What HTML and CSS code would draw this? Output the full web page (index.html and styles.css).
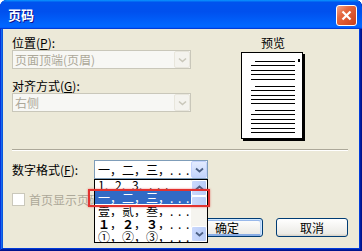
FILE: index.html
```html
<!DOCTYPE html>
<html lang="zh-CN">
<head>
	<meta charset="utf-8">
	<title>页码</title>
	<link rel="stylesheet" href="styles.css">
</head>
<body>
	<div class="window">
		<div class="titlebar">
			<span class="title">页码</span>
			<span class="close">
				<svg width="19" height="19" viewBox="0 0 19 19"><path d="M5.5 5.5 L13.5 13.5 M13.5 5.5 L5.5 13.5" stroke="#fff" stroke-width="2.2"/></svg>
			</span>
		</div>

		<div class="client">
			<div class="top">
				<div class="fields">
					<div class="label">位置(<u>P</u>):</div>
					<div class="combo disabled">
						<span class="value">页面顶端(页眉)</span>
						<span class="drop"><svg width="9" height="6" viewBox="0 0 9 6"><path d="M1 1.5 L4.5 4.5 L8 1.5" fill="none" stroke="#c9c7ba" stroke-width="1.6"/></svg></span>
					</div>
					<div class="label second">对齐方式(<u>G</u>):</div>
					<div class="combo disabled">
						<span class="value">右侧</span>
						<span class="drop"><svg width="9" height="6" viewBox="0 0 9 6"><path d="M1 1.5 L4.5 4.5 L8 1.5" fill="none" stroke="#c9c7ba" stroke-width="1.6"/></svg></span>
					</div>
				</div>

				<div class="preview">
					<div class="label">预览</div>
					<svg class="page" width="64" height="89" viewBox="0 0 64 89" shape-rendering="crispEdges">
						<rect x="2" y="2" width="62" height="87" fill="#000"/>
						<rect x="0.5" y="0.5" width="61" height="86" fill="#fff" stroke="#000"/>
						<rect x="57" y="7" width="2" height="3" fill="#000"/>
						<path stroke="#000" d="M14 9.5H54 M10 13.5H54 M10 18.5H54 M10 22.5H54 M10 27.5H54
							M14 34.5H54 M10 38.5H54 M10 43.5H54 M10 47.5H54 M10 51.5H54
							M14 58.5H54 M10 62.5H54 M10 67.5H54 M10 71.5H54 M10 76.5H54 M10 80.5H54"/>
					</svg>
				</div>
			</div>

			<div class="separator"></div>

			<div class="format-row">
				<div class="label">数字格式(<u>F</u>):</div>
				<div class="combo-wrap">
					<div class="combo">
						<span class="value"><span class="cell">一，</span><span class="cell">二，</span><span class="cell">三，</span><span class="dots">. . .</span></span>
						<span class="drop"><svg width="9" height="6" viewBox="0 0 9 6"><path d="M1 1.5 L4.5 4.5 L8 1.5" fill="none" stroke="#4d6185" stroke-width="1.8"/></svg></span>
					</div>
					<!-- 展开的下拉列表 -->
					<div class="droplist">
						<div class="items">
							<div class="item"><span class="cell half">1,</span><span class="cell half">2,</span><span class="cell half">3,</span><span class="dots">. . .</span></div>
							<div class="item selected"><span class="cell">一，</span><span class="cell">二，</span><span class="cell">三，</span><span class="dots">. . .</span></div>
							<div class="item"><span class="cell">壹，</span><span class="cell">贰，</span><span class="cell">叁，</span><span class="dots">. . .</span></div>
							<div class="item"><span class="cell"><b>１</b>，</span><span class="cell"><b>２</b>，</span><span class="cell"><b>３</b>，</span><span class="dots">. . .</span></div>
							<div class="item"><span class="cell">①，</span><span class="cell">②，</span><span class="cell">③，</span><span class="dots">. . .</span></div>
						</div>
						<div class="scrollbar">
							<span class="sb-btn"><svg width="9" height="6" viewBox="0 0 9 6"><path d="M1 4.5 L4.5 1.5 L8 4.5" fill="none" stroke="#4d6185" stroke-width="1.8"/></svg></span>
							<span class="sb-thumb"></span>
							<span class="sb-track"></span>
							<span class="sb-btn"><svg width="9" height="6" viewBox="0 0 9 6"><path d="M1 1.5 L4.5 4.5 L8 1.5" fill="none" stroke="#4d6185" stroke-width="1.8"/></svg></span>
						</div>
						<div class="mark"></div>
					</div>
				</div>
			</div>

			<div class="check-row">
				<span class="checkbox"></span>
				<span class="check-label">首页显示页码(<u>S</u>)</span>
			</div>

			<div class="buttons">
				<button class="btn default">确定</button>
				<button class="btn">取消</button>
			</div>
		</div>
	</div>
</body>
</html>
```

FILE: styles.css
```css
*{
	box-sizing: border-box;
}
body{
	margin: 0;
	background: #fff;
	font: 12px/14px "Noto Sans CJK SC", "Liberation Sans", sans-serif;
	color: #000;
}
u{
	text-decoration: underline;
}

/* 窗口外框 */
.window{
	width: 362px;
	height: 251px;
	display: flex;
	flex-direction: column;
	background: #0855dd;
	border-radius: 7px 7px 0 0;
	overflow: hidden;
	box-shadow: inset -1px -1px #00138c, inset 1px 1px #0831d9, inset -2px -2px #001ea0, inset 2px 2px #166aee, inset -3px -3px #003bda, inset 3px 3px #0855dd;
}
.titlebar{
	flex: none;
	height: 29px;
	display: flex;
	align-items: center;
	padding: 0 5px 0 8px;
	background: linear-gradient(180deg, #0997ff, #0053ee 8%, #0050ee 40%, #0066ff 88%, #0066ff 93%, #005bff 95%, #003dd7 96%, #003dd7);
}
.title{
	flex: 1;
	padding-top: 1px;
	color: #fff;
	font-size: 13px;
	font-weight: bold;
	text-shadow: 1px 1px #0f1089;
}
.close{
	width: 21px;
	height: 21px;
	margin-top: 2px;
	border: 1px solid #fff;
	border-radius: 3px;
	background: linear-gradient(135deg, #f2a48a 0%, #e5683f 35%, #d8512b 70%, #c8401c 100%);
	display: flex;
}

.client{
	flex: 1;
	margin: 0 3px 3px;
	padding: 7px 11px 0 9px;
	background: #ece9d8;
}
.label{
	height: 14px;
	white-space: nowrap;
}

.top{
	display: flex;
	height: 105px;
}
.fields{
	width: 179px;
}
.fields .second{
	margin-top: 10px;
}

/* 下拉框 */
.combo{
	height: 19px;
	display: flex;
	border: 1px solid #7f9db9;
	background: #fff;
}
.combo .value{
	flex: 1;
	padding-left: 2px;
	line-height: 17px;
	white-space: nowrap;
	overflow: hidden;
}
.combo .drop{
	width: 16px;
	border: 1px solid #c3d3fd;
	border-radius: 2px;
	background: linear-gradient(#e3ebfe, #c3d5fb);
	display: flex;
	align-items: center;
	justify-content: center;
}
.combo.disabled{
	border-color: #c9c7ba;
	background: #f7f7f4;
}
.combo.disabled .value{
	color: #aca899;
}
.combo.disabled .drop{
	border-color: #e8e6dc;
	background: #f4f3ee;
}

.preview{
	width: 64px;
	margin-left: 50px;
	display: flex;
	flex-direction: column;
	align-items: center;
}
.preview .page{
	margin-top: 2px;
}

.separator{
	margin-top: 8px;
	height: 2px;
	border-top: 1px solid #aca899;
	border-bottom: 1px solid #fff;
}

.format-row{
	margin-top: 9px;
	display: flex;
	align-items: center;
}
.format-row .label{
	width: 82px;
}
.combo-wrap{
	position: relative;
	width: 114px;
}
.combo-wrap .combo .value{
	padding-left: 3px;
}
.cell{
	display: inline-block;
	width: 24px;
}
.cell.half{
	width: 17px;
}
.dots{
	letter-spacing: 1px;
}

/* 展开的列表 */
.droplist{
	position: absolute;
	top: 19px;
	left: 0;
	width: 114px;
	height: 64px;
	display: flex;
	border: 1px solid #000;
	background: #fff;
	z-index: 2;
}
.items{
	flex: 1;
	overflow: hidden;
}
.item{
	height: 13px;
	padding-left: 3px;
	line-height: 13px;
	white-space: nowrap;
	overflow: hidden;
}
.item:first-child{
	margin-top: -2px;
}
.item.selected{
	background: #316ac5;
	color: #fff;
}
.scrollbar{
	width: 16px;
	display: flex;
	flex-direction: column;
	background: #f5f4ef;
}
.sb-btn,
.sb-thumb{
	border: 1px solid #fff;
	border-radius: 2px;
	background: linear-gradient(90deg, #cad8fc, #b9cdf8);
}
.sb-btn{
	height: 16px;
	display: flex;
	align-items: center;
	justify-content: center;
}
.sb-thumb{
	height: 11px;
}
.sb-track{
	flex: 1;
}
.mark{
	position: absolute;
	left: -7px;
	top: 9px;
	width: 122px;
	height: 18px;
	border: 2px solid #e2322f;
	box-shadow: 0 0 2px rgba(226, 50, 47, 0.6);
	z-index: 3;
}

.check-row{
	margin-top: 14px;
	height: 13px;
	display: flex;
	align-items: center;
}
.checkbox{
	width: 13px;
	height: 13px;
	border: 1px solid #cac8bb;
	background: #fff;
}
.check-label{
	margin-left: 4px;
	color: #aca899;
	white-space: nowrap;
}

.buttons{
	margin-top: 12px;
	display: flex;
	justify-content: flex-end;
	gap: 13px;
}
.btn{
	width: 72px;
	height: 19px;
	padding: 0;
	border: 1px solid #003c74;
	border-radius: 3px;
	background: linear-gradient(180deg, #fff, #ecebe6 86%, #d6d0c5);
	font: inherit;
	line-height: 16px;
	color: #000;
}
.btn.default{
	box-shadow: inset -1px 1px #cee7ff, inset 1px 2px #98b8ea, inset -2px 2px #bcd4f6, inset 1px -1px #89ade4, inset 2px -2px #89ade4;
}
```
